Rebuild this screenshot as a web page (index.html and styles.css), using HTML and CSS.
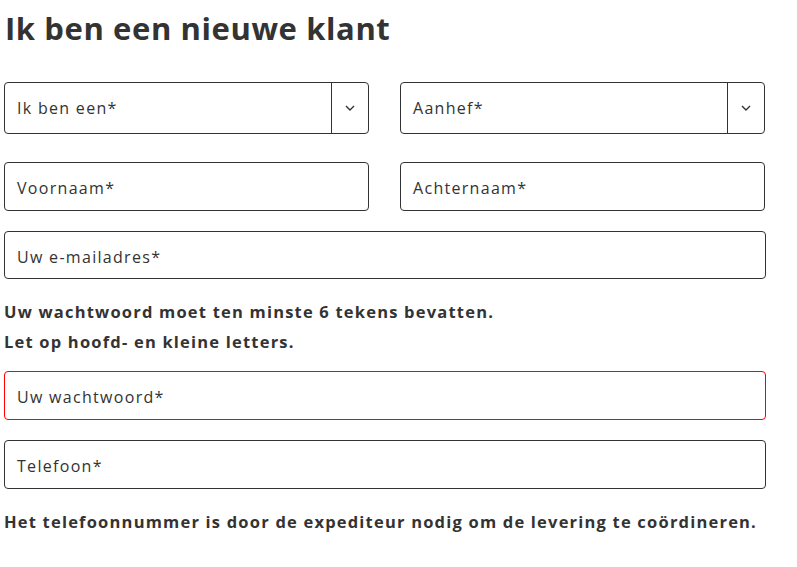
FILE: index.html
```html
<!DOCTYPE html>
<html lang="nl">
<head>
<meta charset="utf-8">
<link rel="stylesheet" href="styles.css">
</head>
<body>
<div class="page">
  <h1 class="title">Ik ben een nieuwe klant</h1>
  <div class="grid two first">
    <div class="select">
      <span class="label">Ik ben een*</span>
      <span class="arrow"><svg width="10" height="6" viewBox="0 0 10 6"><path d="M1 1l4 4 4-4" fill="none" stroke="#333" stroke-width="1.4"/></svg></span>
    </div>
    <div class="select">
      <span class="label">Aanhef*</span>
      <span class="arrow"><svg width="10" height="6" viewBox="0 0 10 6"><path d="M1 1l4 4 4-4" fill="none" stroke="#333" stroke-width="1.4"/></svg></span>
    </div>
  </div>
  <div class="grid two second">
    <div class="field"><span class="label">Voornaam*</span></div>
    <div class="field"><span class="label">Achternaam*</span></div>
  </div>
  <div class="field wide email"><span class="label">Uw e-mailadres*</span></div>
  <p class="note">Uw wachtwoord moet ten minste 6 tekens bevatten.<br>Let op hoofd- en kleine letters.</p>
  <div class="field wide error"><span class="label">Uw wachtwoord*</span></div>
  <div class="field wide phone"><span class="label">Telefoon*</span></div>
  <p class="note bottom">Het telefoonnummer is door de expediteur nodig om de levering te coördineren.</p>
</div>
</body>
</html>
```
FILE: styles.css
```css
* { box-sizing: border-box; }
html, body { margin: 0; padding: 0; background: #fff; }
body { font-family: "Open Sans", "DejaVu Sans", sans-serif; color: #333; }
.page { padding: 0 4px; width: 770px; }
.title {
  margin: 0;
  padding-top: 10px;
  height: 82px;
  font-size: 31px;
  font-weight: 700;
  line-height: 36px;
  letter-spacing: 0.6px;
  padding-left: 1px;
}
.grid.two { display: grid; grid-template-columns: 365px 365px; column-gap: 31px; }
.first { height: 52px; }
.second { margin-top: 28px; height: 49px; }
.select, .field {
  border: 1px solid #333;
  border-radius: 4px;
  display: flex;
  align-items: center;
  font-size: 16px;
  letter-spacing: 1.3px;
}
.select { height: 52px; }
.field { height: 49px; padding-top: 3px; }
.label { padding-left: 12px; flex: 1; }
.arrow {
  width: 37px;
  align-self: stretch;
  border-left: 1px solid #333;
  display: flex;
  align-items: center;
  justify-content: center;
}
.arrow svg { display: block; }
.wide { width: 762px; }
.email { margin-top: 20px; height: 48px; }
.note {
  margin: 0;
  font-size: 16.5px;
  font-weight: 700;
  line-height: 30px;
  letter-spacing: 1.2px;
}
.email + .note { padding-top: 18px; height: 92px; }
.error { border-color: #f00; height: 49px; }
.phone { margin-top: 20px; height: 49px; }
.bottom { padding-top: 18px; letter-spacing: 1.2px; }
```
